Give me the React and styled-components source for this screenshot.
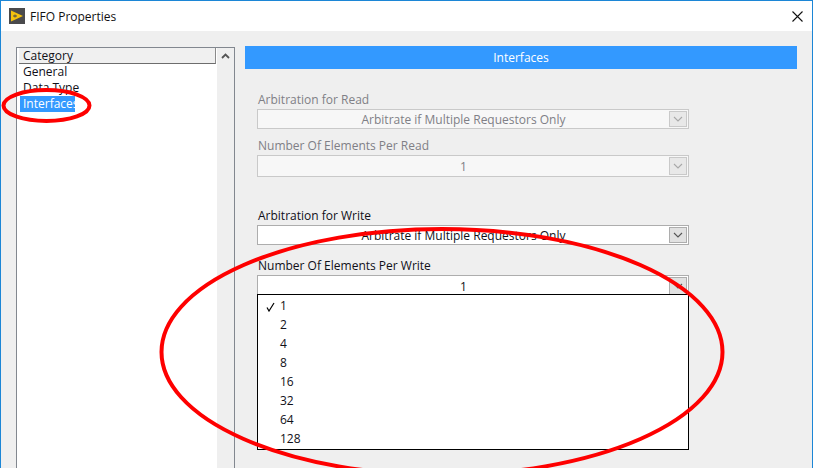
import React from "react";
import styled, { createGlobalStyle } from "styled-components";

const Global = createGlobalStyle`
  html, body { margin: 0; padding: 0; background: #efefef; overflow: hidden; }
  body { font-family: "Open Sans", "Noto Sans", sans-serif; font-size: 12px; color: #101018; }
`;

const Window = styled.div`
  position: relative;
  box-sizing: border-box;
  width: 813px;
  height: 468px;
  border: 1px solid #1c86d6;
  border-bottom: none;
  background: #efefef;
  display: flex;
  flex-direction: column;
  overflow: hidden;
`;

const TitleBar = styled.div`
  height: 30px;
  flex: none;
  background: #fff;
  display: flex;
  align-items: center;
  padding: 0 9px 0 8px;
`;

const TitleText = styled.span`
  margin-left: 5px;
  flex: 1;
  font-size: 12px;
  color: #111;
`;

const Body = styled.div`
  flex: 1;
  display: flex;
  padding: 15px 15px 0;
  min-height: 0;
`;

const ListBox = styled.div`
  box-sizing: border-box;
  flex: none;
  width: 219px;
  height: 460px;
  margin-top: 1px;
  border: 1px solid #82878f;
  border-bottom: none;
  display: flex;
  background: #efefef;
`;

const ListMain = styled.div`
  width: 200px;
  flex: none;
  background: #fff;
  padding: 0 0 0 2px;
  box-sizing: border-box;
`;

const ListHeader = styled.div`
  box-sizing: border-box;
  height: 16px;
  line-height: 16px;
  width: 197px;
  padding-left: 4px;
  background: #f0f0f0;
  border-bottom: 1px solid #6d6d6d;
  border-right: 1px solid #8a8a8a;
  margin-bottom: 0;
`;

const ListItem = styled.div`
  height: 16px;
  line-height: 16px;
  padding: 0 0 0 3px;
  width: ${(p) => (p.$selected ? "52px" : "auto")};
  margin-left: 1px;
  background: ${(p) => (p.$selected ? "#3399ff" : "transparent")};
  color: ${(p) => (p.$selected ? "#fff" : "#101018")};
`;

const ScrollColumn = styled.div`
  flex: 1;
  display: flex;
  justify-content: center;
  padding-top: 5px;
`;

const Content = styled.div`
  flex: none;
  width: 552px;
  margin-left: 10px;
`;

const SectionHeader = styled.div`
  height: 23px;
  line-height: 23px;
  background: #3399ff;
  color: #fff;
  text-align: center;
`;

const Field = styled.div`
  position: relative;
  width: 432px;
  margin: ${(p) => p.$top}px 0 0 12px;
  color: ${(p) => (p.$disabled ? "#7f7f86" : "#101018")};
`;

const FieldLabel = styled.div`
  height: 17px;
  line-height: 16px;
  padding-left: 1px;
`;

const Combo = styled.div`
  box-sizing: border-box;
  height: ${(p) => p.$h}px;
  border: 1px solid ${(p) => (p.$disabled ? "#c9c9c9" : "#adadad")};
  background: ${(p) => (p.$disabled ? "#f7f7f7" : "#fff")};
  display: flex;
  align-items: center;
  padding-right: 1px;
`;

const ComboValue = styled.div`
  flex: 1;
  text-align: center;
  white-space: nowrap;
`;

const ComboButton = styled.div`
  box-sizing: border-box;
  width: 18px;
  height: calc(100% - 2px);
  border: 1px solid ${(p) => (p.$disabled ? "#c9c9c9" : "#adadad")};
  background: ${(p) => (p.$disabled ? "#e8e8e8" : "#e1e1e1")};
  display: flex;
  align-items: center;
  justify-content: center;
`;

const Menu = styled.div`
  position: absolute;
  left: 0;
  top: 36px;
  z-index: 2;
  box-sizing: border-box;
  width: 432px;
  height: 156px;
  border: 1px solid #000;
  background: #fff;
  padding-top: 1px;
`;

const MenuItem = styled.div`
  position: relative;
  height: 19px;
  line-height: 19px;
  padding-left: 22px;
  color: #101018;
`;

const Check = styled.svg`
  position: absolute;
  left: 8px;
  top: 6px;
`;

const Overlay = styled.svg`
  position: absolute;
  left: -1px;
  top: -1px;
  z-index: 5;
  pointer-events: none;
`;

const AppIcon = () => (
  <svg width="16" height="16" viewBox="0 0 16 16">
    <rect width="16" height="16" fill="#4a4a4c" />
    <path d="M2 2.5 L14 8 L2 13.5 Z" fill="#f4c20d" />
    <path d="M4 8 H8 M6 6.5 V9.5" stroke="#4a4a4c" strokeWidth="1" />
  </svg>
);

const CloseIcon = () => (
  <svg width="11" height="11" viewBox="0 0 11 11">
    <path d="M0.5 0.5 L10.5 10.5 M10.5 0.5 L0.5 10.5" stroke="#111" strokeWidth="1.1" fill="none" />
  </svg>
);

const Chevron = ({ disabled }) => (
  <svg width="10" height="6" viewBox="0 0 10 6">
    <path d="M1 1 L5 5 L9 1" stroke={disabled ? "#a8a8a8" : "#555"} strokeWidth="1.1" fill="none" />
  </svg>
);

const ScrollUp = () => (
  <svg width="9" height="6" viewBox="0 0 9 6">
    <path d="M1 5 L4.5 1.5 L8 5" stroke="#555" strokeWidth="1.8" fill="none" />
  </svg>
);

const items = ["1", "2", "4", "8", "16", "32", "64", "128"];
const LONG = "Arbitrate if Multiple Requestors Only";

const ComboField = ({ label, value, top, h, disabled, children }) => (
  <Field $top={top} $disabled={disabled}>
    <FieldLabel>{label}</FieldLabel>
    <Combo $h={h} $disabled={disabled}>
      <ComboValue>{value}</ComboValue>
      <ComboButton $disabled={disabled}>
        <Chevron disabled={disabled} />
      </ComboButton>
    </Combo>
    {children}
  </Field>
);

export default function App() {
  return (
    <>
      <Global />
      <Window>
        <TitleBar>
          <AppIcon />
          <TitleText>FIFO Properties</TitleText>
          <CloseIcon />
        </TitleBar>
        <Body>
          <ListBox>
            <ListMain>
              <ListHeader>Category</ListHeader>
              <ListItem>General</ListItem>
              <ListItem>Data Type</ListItem>
              <ListItem $selected>Interfaces</ListItem>
            </ListMain>
            <ScrollColumn>
              <ScrollUp />
            </ScrollColumn>
          </ListBox>
          <Content>
            <SectionHeader>Interfaces</SectionHeader>
            <ComboField label="Arbitration for Read" value={LONG} top={23} h={20} disabled />
            <ComboField label="Number Of Elements Per Read" value="1" top={9} h={22} disabled />
            <ComboField label="Arbitration for Write" value={LONG} top={31} h={20} />
            <ComboField label="Number Of Elements Per Write" value="1" top={13} h={22}>
              <Menu>
                {items.map((it, i) => (
                  <MenuItem key={it}>
                    {i === 0 && (
                      <Check width="10" height="10" viewBox="0 0 10 10">
                        <path d="M1 5.5 L3 9 L8 1" stroke="#000" strokeWidth="1.2" fill="none" />
                      </Check>
                    )}
                    {it}
                  </MenuItem>
                ))}
              </Menu>
            </ComboField>
          </Content>
        </Body>
        <Overlay width="813" height="480" viewBox="0 0 813 480">
          <ellipse cx="46.5" cy="105.5" rx="43" ry="15.5" fill="none" stroke="#fe0000" strokeWidth="4" />
          <ellipse cx="442" cy="352" rx="280.5" ry="123" fill="none" stroke="#fe0000" strokeWidth="4" />
        </Overlay>
      </Window>
    </>
  );
}
